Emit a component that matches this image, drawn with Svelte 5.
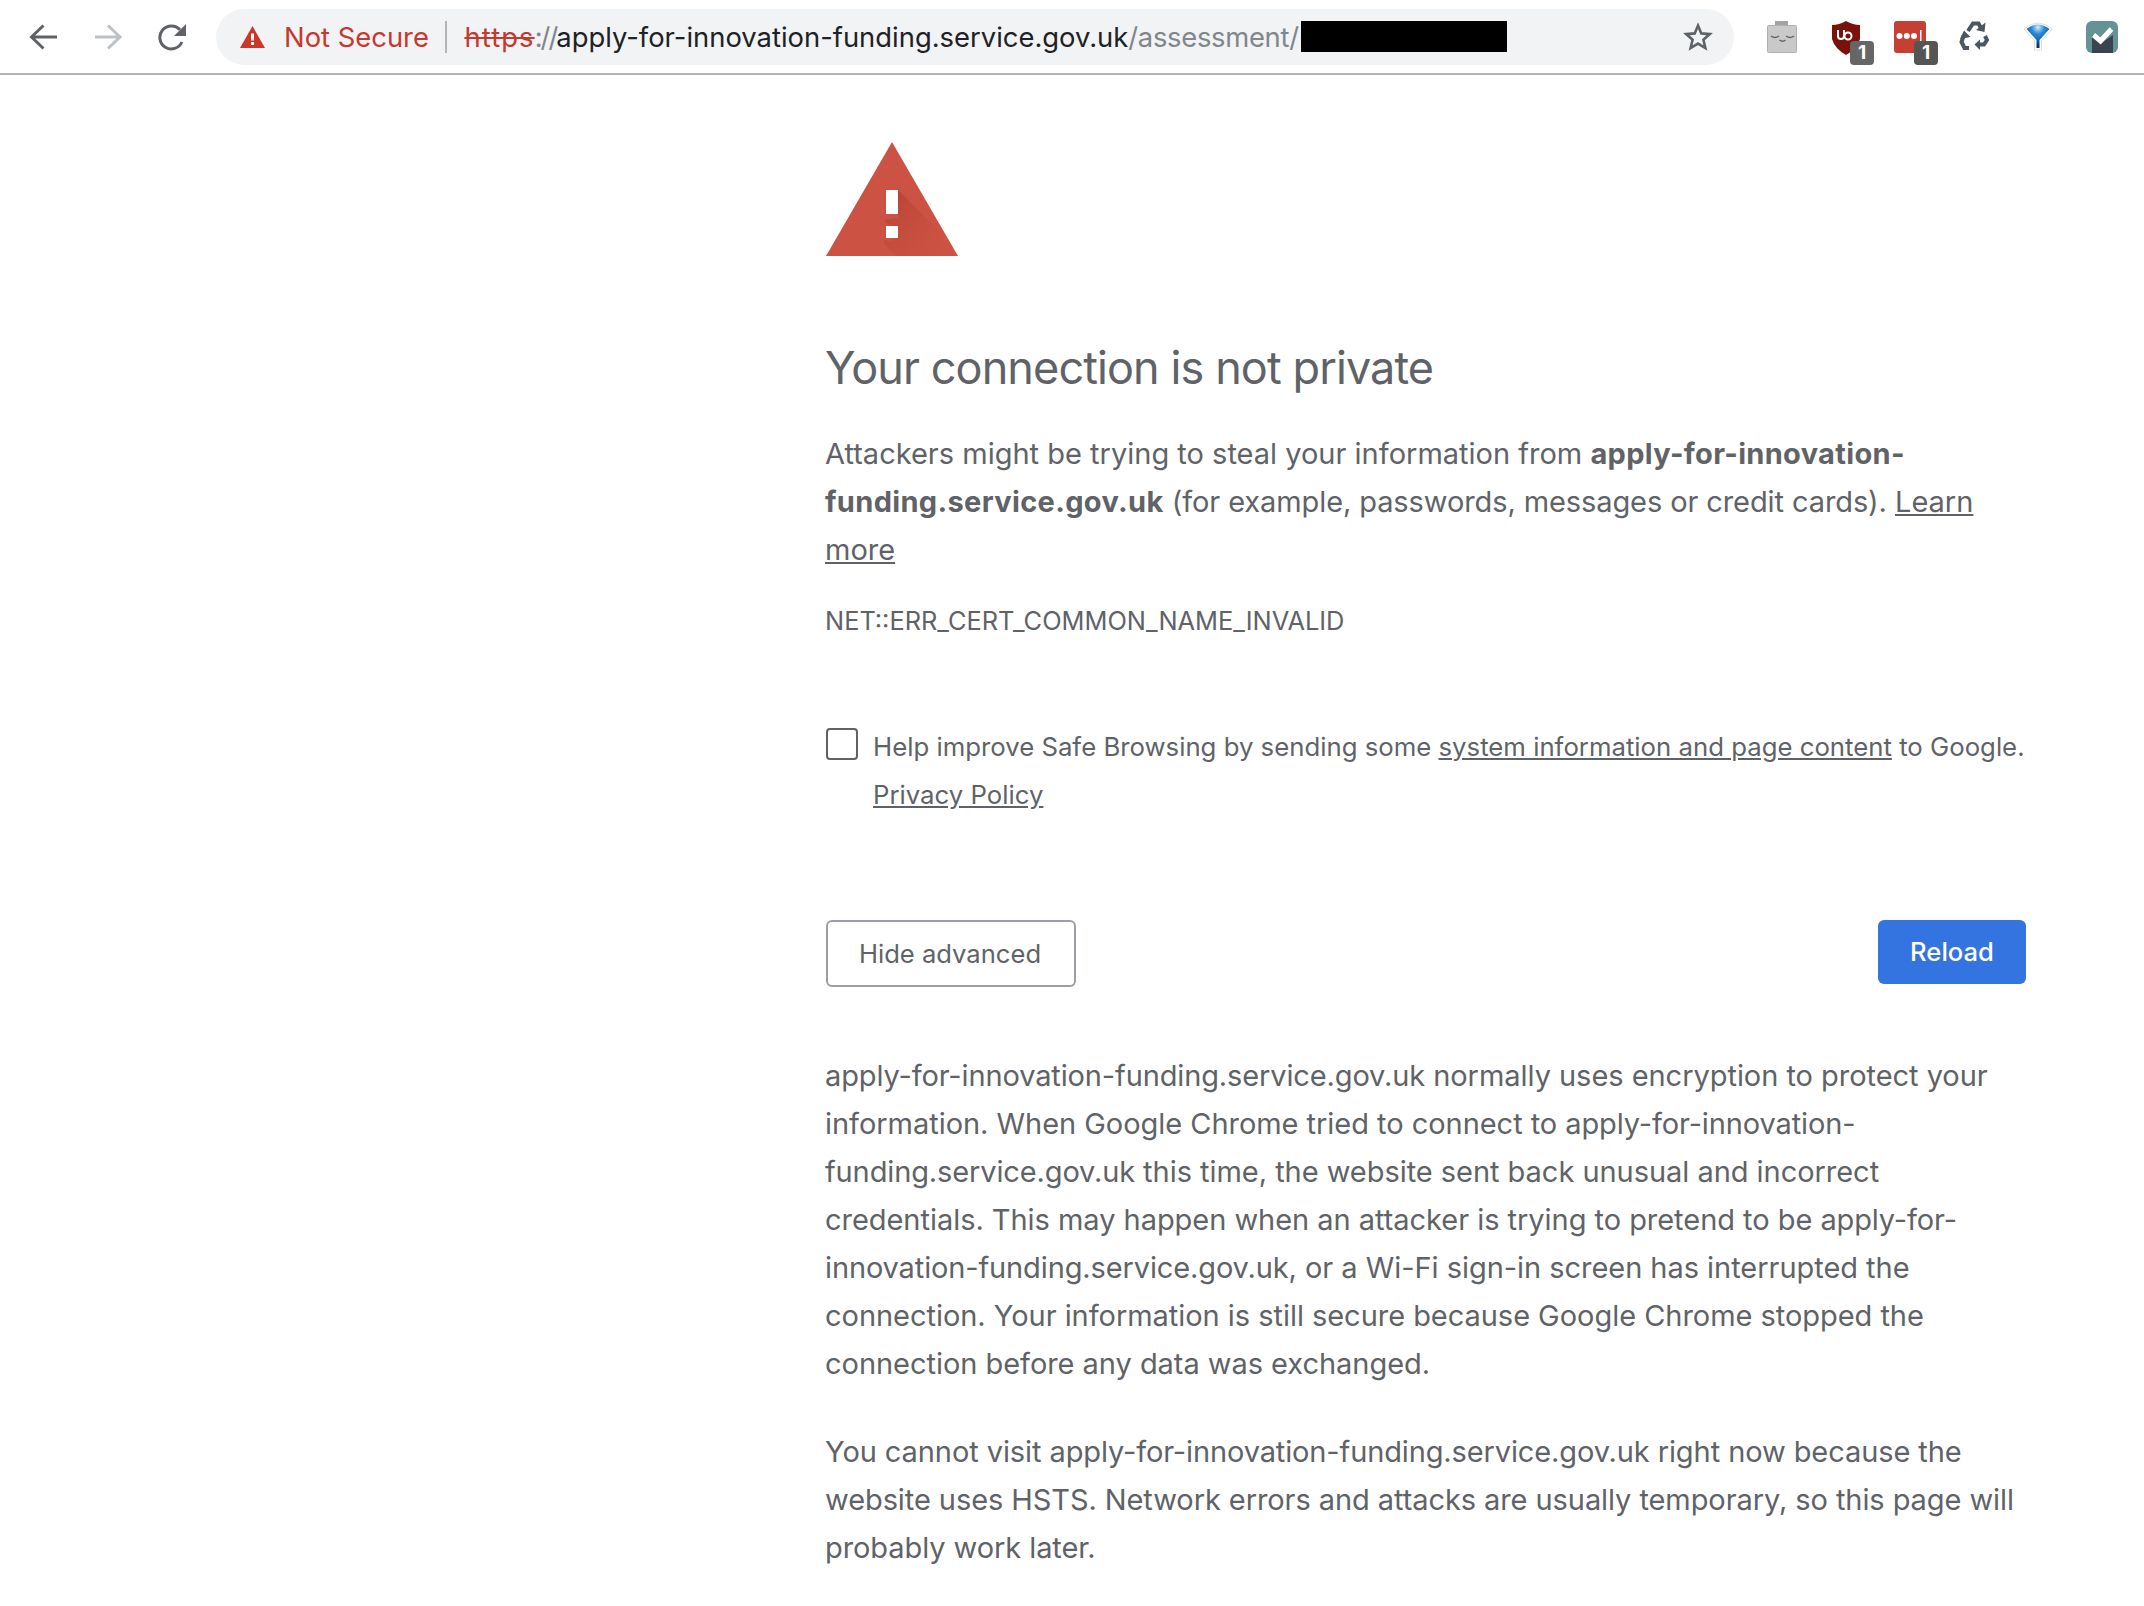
<script lang="ts">
  const host = "apply-for-innovation-funding.service.gov.uk";
</script>

<div class="page">
  <header class="toolbar">
    <div class="nav">
      <button class="nav-btn" aria-label="Back">
        <svg width="30" height="30" viewBox="0 0 30 30"><path d="M29 15H3.500M15.500 3.500L3.500 15 15.500 26.500" fill="none" stroke="#5f6368" stroke-width="3"/></svg>
      </button>
      <button class="nav-btn" aria-label="Forward">
        <svg width="30" height="30" viewBox="0 0 30 30"><path d="M2 15h25M15 3.500L27 15 15 26.500" fill="none" stroke="#bdc1c6" stroke-width="3"/></svg>
      </button>
      <button class="nav-btn" aria-label="Reload">
        <svg width="30" height="30" viewBox="0 0 30 30"><path d="M23.900 20A11.500 11.500 0 1 1 22 7.800" fill="none" stroke="#5f6368" stroke-width="3"/><path d="M28 2v12H16z" fill="#5f6368"/></svg>
      </button>
    </div>
    <div class="omnibox">
      <svg class="warn-small" width="25" height="22" viewBox="0 0 25 22"><path d="M12.500 0L25 22H0z" fill="#c9392b"/><path d="M11 7.500h3v7h-3zM11 16h3v3h-3z" fill="#f1f3f4"/></svg>
      <span class="not-secure">Not Secure</span>
      <span class="divider"></span>
      <span class="url"><span class="scheme">https</span><span class="dim slashes">://</span>{host}<span class="dim path">/assessment/</span></span>
      <span class="redacted"></span>
      <svg class="star" width="30" height="30" viewBox="0 0 30 30"><path d="M15 3.500l3.300 7.900 8.500.7-6.400 5.600 2 8.300-7.400-4.400-7.400 4.400 2-8.300-6.400-5.600 8.500-.7z" fill="none" stroke="#5f6368" stroke-width="2.600"/></svg>
    </div>
    <div class="extensions">
      <span class="ext">
        <svg width="30" height="32" viewBox="0 0 30 32"><path d="M8 0h13v5H8z" fill="#a3a3a3"/><rect x=".5" y="4.500" width="29" height="27" rx="1" fill="#c9c9c9" stroke="#b0b0b0"/><path d="M4 15q4 3 8 0M19 15q4 3 8 0M12.500 19q3 2.500 6 0" fill="none" stroke="#666" stroke-width="1.400"/></svg>
      </span>
      <span class="ext">
        <svg width="28" height="34" viewBox="0 0 28 34"><path d="M0 4q7 0 14-4 7 4 14 4v14q-3 10-14 16Q3 28 0 18z" fill="#7a120c"/><path d="M6 9v6a3 3 0 0 0 6 0V9" fill="none" stroke="#fff" stroke-width="2"/><circle cx="16" cy="15" r="3.500" fill="none" stroke="#fff" stroke-width="2"/></svg>
        <span class="badge">1</span>
      </span>
      <span class="ext">
        <svg width="32" height="32" viewBox="0 0 32 32"><rect width="32" height="32" rx="3" fill="#c73e32"/><circle cx="5.500" cy="15" r="3" fill="#fff"/><circle cx="12.800" cy="15" r="3" fill="#fff"/><circle cx="20" cy="15" r="3" fill="#fff"/><path d="M26 9h1.500v12H26z" fill="#fff"/></svg>
        <span class="badge dark">1</span>
      </span>
      <span class="ext">
        <svg width="30" height="30" viewBox="0 0 30 30">
          <g fill="none" stroke="#4a5662" stroke-width="4">
            <path d="M9 10l5-7.500h5.500L22 7" />
            <path d="M4.500 15L2.500 21 5.500 27H10" />
            <path d="M20 23.500h5l3-4.500-2-4" />
          </g>
          <path d="M26.500 1.500L25.500 11 17 9zM5 9.500L11.500 16 1 18zM15.500 23.500L21 18.500V29z" fill="#4a5662" />
        </svg>
      </span>
      <span class="ext">
        <svg width="30" height="30" viewBox="0 0 30 30">
          <defs>
            <radialGradient id="gem" cx=".5" cy=".12" r=".8">
              <stop offset="0" stop-color="#d4eef9" />
              <stop offset=".35" stop-color="#2a8ada" />
              <stop offset=".75" stop-color="#0d5cab" />
              <stop offset="1" stop-color="#0b2f5e" />
            </radialGradient>
          </defs>
          <path d="M1 8Q15-4 29 8L18.500 20v9h-7v-9z" fill="#fff" stroke="#dcdcdc" />
          <path d="M3.500 8Q15-1 26.500 8L16.500 19v8h-3v-8z" fill="url(#gem)" />
        </svg>
      </span>
      <span class="ext">
        <svg width="32" height="32" viewBox="0 0 32 32"><rect width="32" height="32" rx="6" fill="#659294"/><path d="M6 32V14l9.500 8L27 14v18z" fill="#3b4350"/><path d="M7.500 14l7 6L25.500 8" fill="none" stroke="#fff" stroke-width="5"/></svg>
      </span>
    </div>
  </header>

  <main class="interstitial">
    <svg class="warning" width="132" height="114" viewBox="0 0 132 114">
      <defs>
        <linearGradient id="shade" x1="0" y1="0" x2="1" y2="1">
          <stop offset="0" stop-color="#a8392c" stop-opacity=".7" />
          <stop offset="1" stop-color="#c94f3f" stop-opacity="0" />
        </linearGradient>
      </defs>
      <path d="M66 0l66 114H0z" fill="#cc5243" />
      <path d="M72 48l40 40 7 26H70l-12-12v-5l6 3 8-8-14-14 14-2z" fill="url(#shade)" />
      <path d="M60 48h12v24H60zM60 84h12v12H60z" fill="#fff" />
    </svg>

    <h1>Your connection is not private</h1>
    <p class="body lead">Attackers might be trying to steal your information from <strong>{host}</strong> <span class="tight">(for example, passwords, messages or credit cards).</span> <a href="#more">Learn more</a></p>
    <div class="error-code">NET::ERR_CERT_COMMON_NAME_INVALID</div>

    <div class="opt-in">
      <span class="checkbox"></span>
      <p>Help improve Safe Browsing by sending some <a href="#info">system information and page content</a> to Google. <a href="#privacy">Privacy Policy</a></p>
    </div>

    <div class="buttons">
      <button class="btn-secondary">Hide advanced</button>
      <button class="btn-primary">Reload</button>
    </div>

    <p class="body details"><span class="host">{host}</span> normally uses encryption to protect your information. When Google Chrome tried to connect to <span class="host">{host}</span> this time, the website sent back unusual and incorrect credentials. This may happen when an attacker is trying to pretend to be <span class="host">{host}</span>, or a Wi-Fi sign-in screen has interrupted the connection. Your information is still secure because Google Chrome stopped the connection before any data was exchanged.</p>
    <p class="body hsts">You cannot visit <span class="host">{host}</span> right now because the website uses HSTS. Network errors and attacks are usually temporary, so this page will probably work later.</p>
  </main>
</div>

<style>
  :global(body) {
    margin: 0;
    background: #fff;
  }

  .page {
    width: 2144px;
    height: 1606px;
    overflow: hidden;
    font-family: Inter, "Liberation Sans", sans-serif;
    color: #5f6368;
  }

  .toolbar {
    display: flex;
    align-items: center;
    height: 73px;
    border-bottom: 2px solid #b4b4b4;
  }

  .nav {
    display: flex;
    gap: 35px;
    padding-left: 28px;
    width: 216px;
    flex: none;
    box-sizing: border-box;
  }

  .nav-btn {
    padding: 0;
    border: 0;
    background: none;
    width: 30px;
    height: 30px;
  }

  .omnibox {
    display: flex;
    align-items: center;
    flex: none;
    width: 1518px;
    height: 56px;
    padding-left: 24px;
    box-sizing: border-box;
    background: #f1f3f4;
    border-radius: 28px;
    font-size: 27.4px;
  }

  .warn-small {
    flex: none;
  }

  .not-secure {
    color: #c5392f;
    margin-left: 19px;
  }

  .divider {
    width: 2px;
    height: 32px;
    background: #b4b4b4;
    margin: 0 17px 0 16.500px;
  }

  .url {
    color: #202124;
    white-space: nowrap;
  }

  .scheme {
    color: #c5392f;
    text-decoration: line-through;
    letter-spacing: 1.1px;
  }

  .dim {
    color: #80868b;
  }

  .slashes {
    letter-spacing: -2px;
  }

  .path {
    letter-spacing: -0.3px;
  }

  .redacted {
    width: 206px;
    height: 31px;
    background: #000;
    margin-left: 2px;
  }

  .star {
    margin-left: auto;
    margin-right: 21px;
  }

  .extensions {
    display: flex;
    align-items: center;
    margin-left: 16px;
  }

  .ext {
    position: relative;
    display: flex;
    justify-content: center;
    align-items: flex-start;
    width: 64px;
    height: 32px;
  }

  .badge {
    position: absolute;
    left: 36px;
    top: 20px;
    width: 24px;
    height: 24px;
    background: #666;
    border-radius: 4px;
    color: #fff;
    font-size: 19px;
    font-weight: 700;
    text-align: center;
    line-height: 24px;
  }

  .badge.dark {
    background: #555;
  }

  .interstitial {
    width: 1201px;
    margin-left: 825px;
    padding-top: 67px;
  }

  .warning {
    display: block;
    margin-left: 1px;
  }

  h1 {
    margin: 84px 0 0;
    font-size: 45px;
    font-weight: 400;
    line-height: 56px;
    letter-spacing: -0.9px;
  }

  .body {
    margin: 0;
    font-size: 29px;
    line-height: 48px;
  }

  .lead {
    margin-top: 34px;
  }

  .tight {
    letter-spacing: -0.1px;
  }

  strong {
    font-weight: 700;
    letter-spacing: 0.33px;
  }

  .host {
    letter-spacing: -0.13px;
  }

  a {
    color: inherit;
    text-decoration: underline;
  }

  .error-code {
    margin-top: 31px;
    font-size: 25.4px;
    line-height: 32px;
  }

  .opt-in {
    display: flex;
    gap: 15px;
    margin-top: 91px;
    width: 1210px;
    font-size: 25.75px;
    line-height: 48px;
  }

  .opt-in p {
    margin: -5px 0 0;
  }

  .checkbox {
    flex: none;
    box-sizing: border-box;
    width: 32px;
    height: 32px;
    margin-left: 1px;
    border: 2px solid #5f6368;
    border-radius: 4px;
  }

  .buttons {
    display: flex;
    justify-content: space-between;
    align-items: flex-start;
    margin-top: 100.500px;
    margin-left: 1px;
  }

  .btn-secondary {
    box-sizing: border-box;
    width: 250px;
    height: 67px;
    padding: 1px 2px 0 0;
    background: #fff;
    border: 2px solid #9aa0a6;
    border-radius: 6px;
    color: #5f6368;
    font: 25.6px Inter, "Liberation Sans", sans-serif;
  }

  .btn-primary {
    box-sizing: border-box;
    width: 148px;
    height: 64px;
    padding: 0;
    background: #3474e0;
    border: 0;
    border-radius: 6px;
    color: #fff;
    font: 500 25.6px Inter, "Liberation Sans", sans-serif;
  }

  .details {
    margin-top: 65px;
    letter-spacing: -0.04px;
  }

  .hsts {
    margin-top: 40px;
    letter-spacing: -0.08px;
  }
</style>
